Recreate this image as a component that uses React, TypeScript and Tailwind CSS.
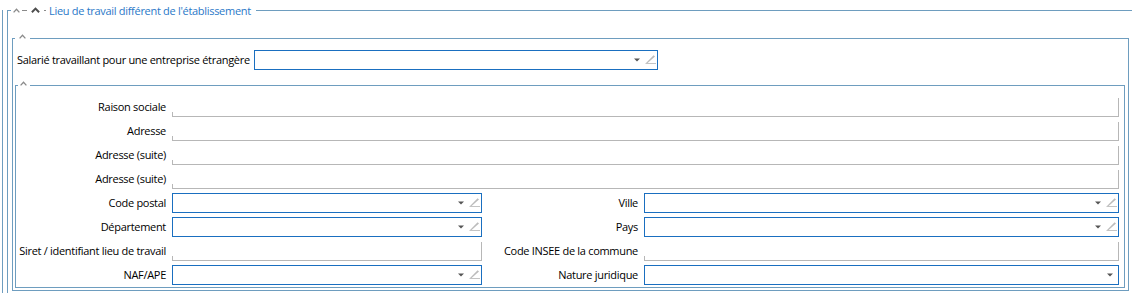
import React from "react";

const LINE = "bg-[#6e9dbf]";

function ThinChevron({ className = "" }: { className?: string }) {
  return (
    <svg width="7" height="5" viewBox="0 0 7 5" className={className}>
      <path d="M0.6 4.4 L3.5 1.3 L6.4 4.4" fill="none" stroke="#8a8a8a" strokeWidth="1.3" />
    </svg>
  );
}

function BoldChevron() {
  return (
    <svg width="9" height="6" viewBox="0 0 9 6" className="-translate-y-[1px]">
      <path d="M0.9 5.2 L4.5 1.6 L8.1 5.2" fill="none" stroke="#4d4d4d" strokeWidth="2" />
    </svg>
  );
}

function Triangle() {
  return (
    <svg width="6" height="4" viewBox="0 0 6 4">
      <polygon points="0,0.5 6,0.5 3,3.5" fill="#555555" />
    </svg>
  );
}

function Pencil() {
  return (
    <svg width="11" height="10" viewBox="0 0 11 10">
      <polygon points="1,9 8.6,1.2 10,2.4 2.6,9" fill="#bcbcbc" />
      <rect x="0.5" y="9" width="10.5" height="1" fill="#c4c4c4" />
    </svg>
  );
}

function Combo({ w, pencil = true }: { w: string; pencil?: boolean }) {
  return (
    <div
      className={`${w} h-[20px] border border-[#1a6fc0] bg-white flex items-center justify-end ${
        pencil ? "pr-[1px]" : "pr-[5px]"
      }`}
    >
      <div className="mt-[-1px]">
        <Triangle />
      </div>
      {pencil && (
        <div className="ml-[5px] mt-[-2px]">
          <Pencil />
        </div>
      )}
    </div>
  );
}

function TextBox({ w }: { w: string }) {
  return (
    <div className={`${w} h-[20px] flex items-end`}>
      <div className="relative w-full h-[19px] border-r border-b border-[#b7b7b7]">
        <div className="absolute left-0 bottom-0 w-px h-[4px] bg-[#b7b7b7]" />
      </div>
    </div>
  );
}

function Label({ text, w }: { text: string; w: string }) {
  return (
    <div className={`${w} shrink-0 text-right pr-[6px] whitespace-nowrap leading-[20px]`}>{text}</div>
  );
}

function FullRow({ label }: { label: string }) {
  return (
    <div className="flex h-[20px] items-center">
      <Label text={label} w="w-[156px]" />
      <TextBox w="w-[947px]" />
    </div>
  );
}

export default function App() {
  return (
    <div
      className="w-[1132px] h-[293px] overflow-hidden bg-white pl-[2px] pt-[10px] text-[11px] tracking-[-0.3px] text-black"
      style={{ fontFamily: '"Open Sans", "Noto Sans", sans-serif' }}
    >
      <div className="h-full border-l border-[#6e9dbf] pl-[4px]">
        {/* outer group */}
        <div className="w-[1200px] h-full border-l border-[#6e9dbf]">
          <div className="h-px flex items-center">
            <div className={`w-[3px] h-px ${LINE}`} />
            <ThinChevron className="ml-[2px]" />
            <div className="ml-[2px] w-[5px] h-px bg-[#8a8a8a]" />
            <div className="ml-[4px]">
              <BoldChevron />
            </div>
            <div className="ml-[4px] w-[2px] h-px bg-[#8a8a8a]" />
            <div className="ml-[3px] whitespace-nowrap text-[#2a78c8] leading-[16px]">
              Lieu de travail différent de l'établissement
            </div>
            <div className={`ml-[5px] flex-1 h-px ${LINE}`} />
          </div>

          <div className="pl-[4px] mt-[27px]">
            {/* second group */}
            <div className="w-[1117px] border-l border-r border-b border-[#6e9dbf] pl-[2px] pb-[2px]">
              <div className="h-px flex items-center -ml-[2px]">
                <div className={`w-[2px] h-px ${LINE}`} />
                <ThinChevron className="ml-[4px] -translate-y-[2px]" />
                <div className={`ml-[4px] flex-1 h-px ${LINE}`} />
              </div>

              <div className="mt-[11px] ml-[2px] flex items-center h-[20px]">
                <div className="w-[237px] shrink-0 whitespace-nowrap leading-[20px]">
                  Salarié travaillant pour une entreprise étrangère
                </div>
                <Combo w="w-[404px]" />
              </div>

              {/* third group */}
              <div className="mt-[15px] w-[1110px] border-l border-r border-b border-[#6e9dbf] pb-[2px]">
                <div className="h-px flex items-center">
                  <div className={`w-[2px] h-px ${LINE}`} />
                  <ThinChevron className="ml-[2px] -translate-y-[2px]" />
                  <div className={`ml-[3px] flex-1 h-px ${LINE}`} />
                </div>

                <div className="mt-[11px] flex flex-col gap-[4px]">
                  <FullRow label="Raison sociale" />
                  <FullRow label="Adresse" />
                  <FullRow label="Adresse (suite)" />
                  <FullRow label="Adresse (suite)" />

                  <div className="flex h-[20px] items-center">
                    <Label text="Code postal" w="w-[156px]" />
                    <Combo w="w-[310px]" />
                    <Label text="Ville" w="w-[162px]" />
                    <Combo w="w-[475px]" />
                  </div>
                  <div className="flex h-[20px] items-center">
                    <Label text="Département" w="w-[156px]" />
                    <Combo w="w-[310px]" />
                    <Label text="Pays" w="w-[162px]" />
                    <Combo w="w-[475px]" />
                  </div>
                  <div className="flex h-[20px] items-center">
                    <Label text="Siret / identifiant lieu de travail" w="w-[156px]" />
                    <TextBox w="w-[310px]" />
                    <Label text="Code INSEE de la commune" w="w-[162px]" />
                    <TextBox w="w-[475px]" />
                  </div>
                  <div className="flex h-[20px] items-center">
                    <Label text="NAF/APE" w="w-[156px]" />
                    <Combo w="w-[310px]" />
                    <Label text="Nature juridique" w="w-[162px]" />
                    <Combo w="w-[475px]" pencil={false} />
                  </div>
                </div>
              </div>
            </div>
          </div>
        </div>
      </div>
    </div>
  );
}
